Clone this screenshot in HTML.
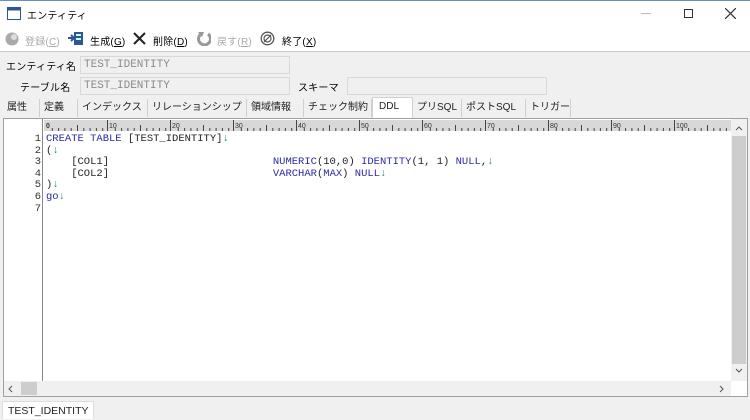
<!DOCTYPE html>
<html><head><meta charset="utf-8">
<style>
*{margin:0;padding:0;box-sizing:border-box}
body{width:750px;height:419px;overflow:hidden;background:#f0f0f0;font-family:"Liberation Sans","Noto Sans CJK JP",sans-serif;font-size:12px;color:#000;position:relative}
.abs{position:absolute}
.jp{font-family:"Liberation Sans","Noto Sans CJK JP",sans-serif;font-size:10px;letter-spacing:0.2px}
.mono{font-family:"Liberation Mono","Noto Sans CJK JP",monospace}
.field{background:#f0f0f0;border:1px solid #d9d9d9;color:#8a8a8a;font-size:11px;padding-left:3px;line-height:16px}
.tab{position:absolute;top:99px;height:18px;line-height:18px;font-size:10px;border-right:1px solid #d0d0d0;padding:0 0 0 4px;color:#222;overflow:hidden;white-space:nowrap}
.code{position:absolute;left:46px;font-size:10.5px;line-height:11.6px;white-space:pre;color:#222}
.k{color:#2a2aa8}
.g{color:#1a8a6a}
</style></head><body>
<div class="abs" style="left:0;top:0;width:750px;height:51px;background:#fff;border-top:1px solid #6a8ec8"></div>
<svg class="abs" style="left:7px;top:7px" width="14" height="13"><rect x="0.5" y="0.5" width="13" height="12" fill="#fff" stroke="#2b5797"/><rect x="0.5" y="0.5" width="13" height="3" fill="#2b5797"/></svg>
<div class="abs jp" style="left:27px;top:7px">エンティティ</div>
<div class="abs" style="left:641px;top:13px;width:10px;height:1px;background:#bbb"></div>
<div class="abs" style="left:684px;top:9px;width:9px;height:9px;border:1px solid #333"></div>
<svg class="abs" style="left:725px;top:8px" width="11" height="11"><path d="M0 0L11 11M11 0L0 11" stroke="#333" stroke-width="1.2"/></svg>
<svg class="abs" style="left:5px;top:32px" width="14" height="14"><circle cx="7" cy="7" r="6.5" fill="#aaa"/><circle cx="9" cy="5" r="3" fill="#ddd"/></svg>
<div class="abs jp" style="left:25px;top:33px;color:#aaa">登録(<u>C</u>)</div>
<svg class="abs" style="left:68px;top:31px" width="16" height="15"><rect x="6" y="1" width="9" height="13" fill="#2b5797"/><rect x="8" y="3" width="5" height="2" fill="#cfe"/><rect x="8" y="7" width="5" height="2" fill="#cfe"/><path d="M0 7h6M3 4l3 3-3 3" stroke="#2b5797" stroke-width="2" fill="none"/></svg>
<div class="abs jp" style="left:90px;top:33px">生成(<u>G</u>)</div>
<svg class="abs" style="left:133px;top:32px" width="13" height="13"><path d="M1 1L12 12M12 1L1 12" stroke="#222" stroke-width="2"/></svg>
<div class="abs jp" style="left:153px;top:33px">削除(<u>D</u>)</div>
<svg class="abs" style="left:197px;top:31px" width="14" height="15"><path d="M4 3A6 6 0 1 0 11 3" stroke="#999" stroke-width="3" fill="none"/><path d="M1 1L7 1L5 6Z" fill="#999"/></svg>
<div class="abs jp" style="left:217px;top:33px;color:#aaa">戻す(<u>R</u>)</div>
<svg class="abs" style="left:260px;top:31px" width="15" height="15"><circle cx="7.5" cy="7.5" r="6.3" fill="none" stroke="#555" stroke-width="1.3"/><circle cx="7.5" cy="7.5" r="3.5" fill="none" stroke="#555" stroke-width="1.2"/><path d="M4 11L11 4" stroke="#555" stroke-width="1.2"/></svg>
<div class="abs jp" style="left:282px;top:33px">終了(<u>X</u>)</div>
<div class="abs" style="left:0;top:51px;width:750px;height:1px;background:#c8c8c8"></div>
<div class="abs jp" style="left:6px;top:58px">エンティティ名</div>
<div class="abs field mono" style="left:80px;top:56px;width:210px;height:18px">TEST_IDENTITY</div>
<div class="abs jp" style="left:20px;top:79px">テーブル名</div>
<div class="abs field mono" style="left:80px;top:77px;width:210px;height:18px">TEST_IDENTITY</div>
<div class="abs jp" style="left:298px;top:79px">スキーマ</div>
<div class="abs field" style="left:347px;top:77px;width:200px;height:18px"></div>
<div class="tab" style="left:3px;width:37px">属性</div>
<div class="tab" style="left:40px;width:38px">定義</div>
<div class="tab" style="left:78px;width:70px">インデックス</div>
<div class="tab" style="left:148px;width:99px">リレーションシップ</div>
<div class="tab" style="left:247px;width:57px">領域情報</div>
<div class="tab" style="left:304px;width:68px">チェック制約</div>
<div class="tab" style="left:372px;width:41px;background:#fff;top:97px;height:21px;border:1px solid #d0d0d0;border-bottom:none;padding-left:6px">DDL</div>
<div class="tab" style="left:413px;width:49px">プリSQL</div>
<div class="tab" style="left:462px;width:64px">ポストSQL</div>
<div class="tab" style="left:526px;width:45px">トリガー</div>
<div class="abs" style="left:3px;top:118px;width:745px;height:279px;background:#fff;border:1px solid #a0a0a0"></div>
<div class="abs" style="left:4px;top:119px;width:39px;height:262px;background:#fff;border-right:1px solid #888"></div>
<svg class="abs" style="left:44px;top:120px" width="687" height="11">
<rect width="687" height="11" fill="#d8d8d8"/>
<g font-family="Liberation Sans" font-size="7" fill="#333">
<text x="2" y="8" font-weight="bold">0</text><text x="65" y="8">10</text><text x="128" y="8">20</text><text x="191" y="8">30</text><text x="254" y="8">40</text><text x="317" y="8">50</text><text x="380" y="8">60</text><text x="443" y="8">70</text><text x="506" y="8">80</text><text x="569" y="8">90</text><text x="632" y="8">100</text>
</g>
<path stroke="#444" stroke-width="1" d="M8.3 8v3M14.6 8v3M20.9 8v3M27.2 8v3M33.5 5v6M39.8 8v3M46.1 8v3M52.4 8v3M58.7 8v3M71.3 8v3M77.6 8v3M83.9 8v3M90.2 8v3M96.5 5v6M102.8 8v3M109.1 8v3M115.4 8v3M121.7 8v3M134.3 8v3M140.6 8v3M146.9 8v3M153.2 8v3M159.5 5v6M165.8 8v3M172.1 8v3M178.4 8v3M184.7 8v3M197.3 8v3M203.6 8v3M209.9 8v3M216.2 8v3M222.5 5v6M228.8 8v3M235.1 8v3M241.4 8v3M247.7 8v3M260.3 8v3M266.6 8v3M272.9 8v3M279.2 8v3M285.5 5v6M291.8 8v3M298.1 8v3M304.4 8v3M310.7 8v3M323.3 8v3M329.6 8v3M335.9 8v3M342.2 8v3M348.5 5v6M354.8 8v3M361.1 8v3M367.4 8v3M373.7 8v3M386.3 8v3M392.6 8v3M398.9 8v3M405.2 8v3M411.5 5v6M417.8 8v3M424.1 8v3M430.4 8v3M436.7 8v3M449.3 8v3M455.6 8v3M461.9 8v3M468.2 8v3M474.5 5v6M480.8 8v3M487.1 8v3M493.4 8v3M499.7 8v3M512.3 8v3M518.6 8v3M524.9 8v3M531.2 8v3M537.5 5v6M543.8 8v3M550.1 8v3M556.4 8v3M562.7 8v3M575.3 8v3M581.6 8v3M587.9 8v3M594.2 8v3M600.5 5v6M606.8 8v3M613.1 8v3M619.4 8v3M625.7 8v3M638.3 8v3M644.6 8v3M650.9 8v3M657.2 8v3M663.5 5v6M669.8 8v3M676.1 8v3M682.4 8v3"/>
<path stroke="#444" d="M63.5 0v11M126.5 0v11M189.5 0v11M252.5 0v11M315.5 0v11M378.5 0v11M441.5 0v11M504.5 0v11M567.5 0v11M630.5 0v11"/>
</svg>
<div class="abs mono" style="left:4px;top:134px;width:37px;text-align:right;font-size:10.5px;line-height:11.6px;color:#333;white-space:pre">1
2
3
4
5
6
7</div>
<div class="code mono" style="top:134px"><span class="k">CREATE TABLE</span> [TEST_IDENTITY]<span class="g">↓</span>
(<span class="g">↓</span>
    [COL1]                          <span class="k">NUMERIC</span>(10,0) <span class="k">IDENTITY</span>(1, 1) <span class="k">NULL</span>,<span class="g">↓</span>
    [COL2]                          <span class="k">VARCHAR</span>(<span class="k">MAX</span>) <span class="k">NULL</span><span class="g">↓</span>
)<span class="g">↓</span>
<span class="k">go</span><span class="g">↓</span>
</div>
<div class="abs" style="left:731px;top:119px;width:16px;height:262px;background:#f0f0f0"></div>
<div class="abs" style="left:732px;top:136px;width:14px;height:228px;background:#cdcdcd"></div>
<svg class="abs" style="left:735px;top:125px" width="8" height="6"><path d="M1 5l3-3 3 3" stroke="#555" fill="none"/></svg>
<svg class="abs" style="left:735px;top:368px" width="8" height="6"><path d="M1 1l3 3 3-3" stroke="#555" fill="none"/></svg>
<div class="abs" style="left:4px;top:381px;width:727px;height:15px;background:#f0f0f0"></div>
<div class="abs" style="left:21px;top:382px;width:16px;height:13px;background:#cdcdcd"></div>
<svg class="abs" style="left:8px;top:385px" width="6" height="8"><path d="M4 1L1 4l3 3" stroke="#555" fill="none"/></svg>
<svg class="abs" style="left:718px;top:385px" width="6" height="8"><path d="M2 1l3 3-3 3" stroke="#555" fill="none"/></svg>
<div class="abs" style="left:2px;top:401px;width:92px;height:18px;background:#fff;border:1px solid #ddd;border-bottom:none;font-size:10.5px;line-height:18px;padding-left:5px;color:#222">TEST_IDENTITY</div>
</body></html>
